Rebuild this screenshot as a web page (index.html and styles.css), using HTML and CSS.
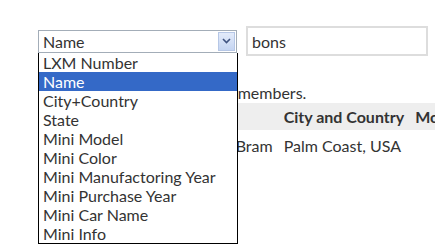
FILE: index.html
```html
<!DOCTYPE html>
<html lang="en">
<head>
    <meta charset="UTF-8">
    <meta name="viewport" content="width=device-width, initial-scale=1.0">
    <title>Members</title>
    <link rel="stylesheet" href="styles.css">
</head>
<body>
    <div class="page">
        <div class="search-bar">
            <div class="select-wrap">
                <div class="select-box">
                    <span class="select-value">Name</span>
                    <span class="select-arrow">
                        <svg width="9" height="6" viewBox="0 0 9 6"><path d="M1 1 L4.5 4.5 L8 1" fill="none" stroke="#3f5380" stroke-width="1.6"/></svg>
                    </span>
                </div>
                <ul class="select-list">
                    <li>LXM Number</li>
                    <li class="selected">Name</li>
                    <li>City+Country</li>
                    <li>State</li>
                    <li>Mini Model</li>
                    <li>Mini Color</li>
                    <li>Mini Manufactoring Year</li>
                    <li>Mini Purchase Year</li>
                    <li>Mini Car Name</li>
                    <li>Mini Info</li>
                </ul>
            </div>
            <input type="text" class="search-input" value="bons">
        </div>

        <p class="hint">Search the list of all members.</p>

        <table class="members">
            <tr class="head">
                <th class="col-num">LXM Number</th>
                <th class="col-name">Name</th>
                <th>City and Country</th>
                <th>Model</th>
            </tr>
            <tr>
                <td class="col-num">1024</td>
                <td class="col-name">Robert Bram</td>
                <td>Palm Coast, USA</td>
                <td></td>
            </tr>
        </table>
    </div>
</body>
</html>
```
FILE: styles.css
```css
body {
    margin: 0;
    font-family: Lato, "Open Sans", sans-serif;
    font-size: 16px;
    color: #333;
    background: white;
}
.page {
    box-sizing: border-box;
    height: 247px;
    padding: 26px 0 0 38px;
    overflow: hidden;
}
.search-bar {
    display: flex;
    align-items: center;
    gap: 9px;
}
.select-wrap {
    position: relative;
}
.select-box {
    width: 197px;
    height: 21px;
    border: 1px solid #a3adb8;
    display: flex;
    align-items: center;
    justify-content: space-between;
    background: white;
}
.select-value {
    padding-left: 4px;
    line-height: 19px;
}
.select-arrow {
    width: 15px;
    height: 17px;
    margin-right: 1px;
    border: 1px solid #b6c7e6;
    background: linear-gradient(#e3ebfa, #c5d5f2);
    display: flex;
    align-items: center;
    justify-content: center;
}
.select-list {
    position: absolute;
    top: 23px;
    left: 0;
    width: 198px;
    margin: 0;
    padding: 0;
    list-style: none;
    border: 1px solid #000;
    border-top: none;
    background: white;
    z-index: 2;
}
.select-list li {
    height: 19px;
    line-height: 19px;
    padding-left: 4px;
}
.select-list .selected {
    background: #3469c7;
    color: white;
}
.search-input {
    width: 170px;
    height: 26px;
    border: 2px solid #ddd;
    padding: 0 4px;
    font-family: Lato, sans-serif;
    font-size: 16px;
    color: #333;
    outline: none;
}
.hint {
    margin: 28px 0 1px 0;
    line-height: 18px;
    padding-left: 59px;
    white-space: nowrap;
}
.members {
    width: max-content;
    border-collapse: collapse;
    white-space: nowrap;
}
.members th,
.members td {
    text-align: left;
    padding: 0 11px 0 0;
}
.members .head {
    background: #eee;
    height: 27px;
}
.members td {
    height: 30px;
}
.col-num {
    width: 135px;
}
```
